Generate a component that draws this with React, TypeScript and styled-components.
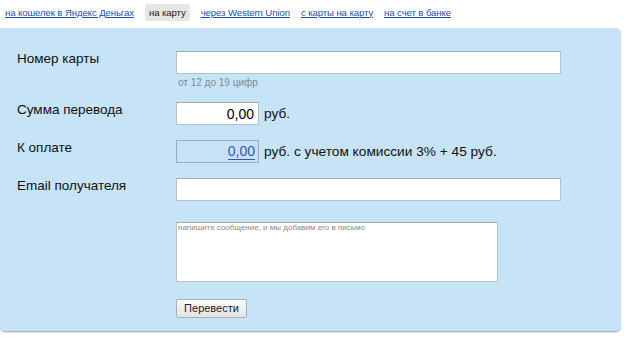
import React, { useState } from "react";
import styled, { createGlobalStyle } from "styled-components";

const GlobalStyle = createGlobalStyle`
  body {
    margin: 0;
    background: #ffffff;
    font-family: "Liberation Sans", Arial, sans-serif;
  }
`;

const Page = styled.div`
  width: 624px;
  height: 343px;
  overflow: hidden;
`;

const Tabs = styled.nav`
  display: flex;
  align-items: center;
  gap: 11px;
  height: 24px;
  padding: 0 0 0 5px;
  margin-bottom: 4px;
  font-family: "Liberation Sans", Tahoma, sans-serif;
  font-size: 9.6px;
  letter-spacing: -0.1px;
`;

const TabLink = styled.a<{ $active?: boolean }>`
  color: ${(p) => (p.$active ? "#222" : "#1a4fb0")};
  text-decoration: ${(p) => (p.$active ? "none" : "underline")};
  background: ${(p) => (p.$active ? "#e6e6e6" : "transparent")};
  padding: ${(p) => (p.$active ? "3px 4px" : "0")};
  border-radius: 2px;
  cursor: pointer;
`;

const Panel = styled.div`
  width: 621px;
  box-sizing: border-box;
  height: 304px;
  background: #c6e3f8;
  border-radius: 0 5px 5px 5px;
  border-bottom: 1px solid #a9b9c6;
  box-shadow: 0 1px 1px rgba(0, 0, 0, 0.12);
  padding: 23px 0 0 17px;
`;

const Row = styled.div<{ $gap: number }>`
  display: grid;
  grid-template-columns: 159px 1fr;
  margin-bottom: ${(p) => p.$gap}px;
`;

const Label = styled.div`
  font-size: 13.5px;
  color: #111;
  line-height: 16px;
`;

const Field = styled.div`
  display: flex;
  flex-direction: column;
`;

const Inline = styled.div`
  display: flex;
  align-items: center;
  gap: 5px;
  font-size: 13.7px;
  color: #111;
`;

const TextInput = styled.input<{ $w: number }>`
  box-sizing: border-box;
  width: ${(p) => p.$w}px;
  height: 23px;
  border: 1px solid #b4c2cc;
  border-top-color: #9fa9b0;
  background: #fff;
  padding: 0 4px;
  font-family: "Liberation Sans", Arial, sans-serif;
  font-size: 14px;
  outline: none;
`;

const AmountInput = styled(TextInput)`
  text-align: right;
  color: #000;
`;

const PayBox = styled.div`
  box-sizing: border-box;
  width: 83px;
  height: 23px;
  border: 1px solid #98aec0;
  background: #c9e1f4;
  display: flex;
  align-items: center;
  justify-content: flex-end;
  padding-right: 3px;
  font-size: 14px;
`;

const PayValue = styled.span`
  color: #2a5cb4;
  border-bottom: 1px solid #2a5cb4;
  line-height: 15px;
`;

const Hint = styled.div`
  font-size: 10px;
  color: #7c8a94;
  margin: 3px 0 0 2px;
`;

const Message = styled.textarea`
  box-sizing: border-box;
  width: 322px;
  height: 60px;
  border: 1px solid #b4c2cc;
  border-top-color: #9fa9b0;
  padding: 0 1px;
  resize: none;
  font-family: "Liberation Sans", Arial, sans-serif;
  font-size: 8px;
  outline: none;
  &::placeholder {
    color: #8a8a8a;
  }
`;

const Submit = styled.button`
  box-sizing: border-box;
  width: 71px;
  height: 19px;
  padding: 0;
  border: 1px solid #a7aeb4;
  border-radius: 2px;
  background: linear-gradient(#fbfbfb, #e3e3e3);
  font-family: "Liberation Sans", Arial, sans-serif;
  font-size: 11px;
  color: #222;
  cursor: pointer;
`;

const tabs = [
  "на кошелек в Яндекс Деньгах",
  "на карту",
  "через Western Union",
  "с карты на карту",
  "на счет в банке",
];

export default function App() {
  const [active] = useState(1);
  return (
    <Page>
      <GlobalStyle />
      <Tabs>
        {tabs.map((t, i) => (
          <TabLink key={t} $active={i === active}>
            {t}
          </TabLink>
        ))}
      </Tabs>
      <Panel>
        <Row $gap={14}>
          <Label>Номер карты</Label>
          <Field>
            <TextInput $w={385} />
            <Hint>от 12 до 19 цифр</Hint>
          </Field>
        </Row>
        <Row $gap={15}>
          <Label>Сумма перевода</Label>
          <Inline>
            <AmountInput $w={83} defaultValue="0,00" />
            <span>руб.</span>
          </Inline>
        </Row>
        <Row $gap={15}>
          <Label>К оплате</Label>
          <Inline>
            <PayBox>
              <PayValue>0,00</PayValue>
            </PayBox>
            <span>руб. с учетом комиссии 3% + 45 руб.</span>
          </Inline>
        </Row>
        <Row $gap={21}>
          <Label>Email получателя</Label>
          <TextInput $w={385} />
        </Row>
        <Row $gap={16}>
          <span />
          <Message placeholder="напишите сообщение, и мы добавим его в письмо" />
        </Row>
        <Row $gap={0}>
          <span />
          <div>
            <Submit>Перевести</Submit>
          </div>
        </Row>
      </Panel>
    </Page>
  );
}
